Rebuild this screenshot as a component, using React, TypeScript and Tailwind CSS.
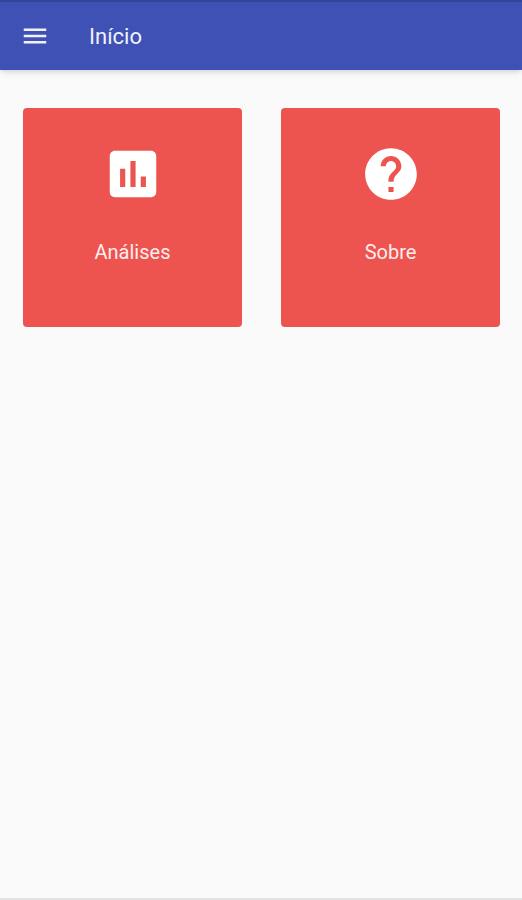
import { MdAssessment, MdHelp, MdMenu } from "react-icons/md";

const items = [
  { label: "Análises", href: "#analises", icon: MdAssessment },
  { label: "Sobre", href: "#sobre", icon: MdHelp },
];

export default function App() {
  return (
    <div className="flex min-h-screen flex-col border-b-2 border-[#e3e3e3] bg-[#fafafa] font-[Roboto,sans-serif]">
      <header className="flex h-[70px] items-center gap-[39px] border-t-2 border-[#32439a] bg-[#3f51b5] px-5 text-[#f0f1fb] shadow-md">
        <button type="button" aria-label="Menu" className="size-[30px]">
          <MdMenu className="size-[30px]" />
        </button>
        <h1 className="text-[22px]">Início</h1>
      </header>
      <main className="grid grid-cols-2 gap-[39px] py-[38px] pr-[22px] pl-[23px]">
        {items.map(({ label, href, icon: Icon }) => (
          <a
            key={label}
            href={href}
            className="flex aspect-square flex-col items-center gap-[33px] rounded bg-[#ed544f] pt-[35px] text-white"
          >
            <Icon className="size-[62px]" />
            <span className="text-xl text-[#fdeeee]">{label}</span>
          </a>
        ))}
      </main>
    </div>
  );
}
